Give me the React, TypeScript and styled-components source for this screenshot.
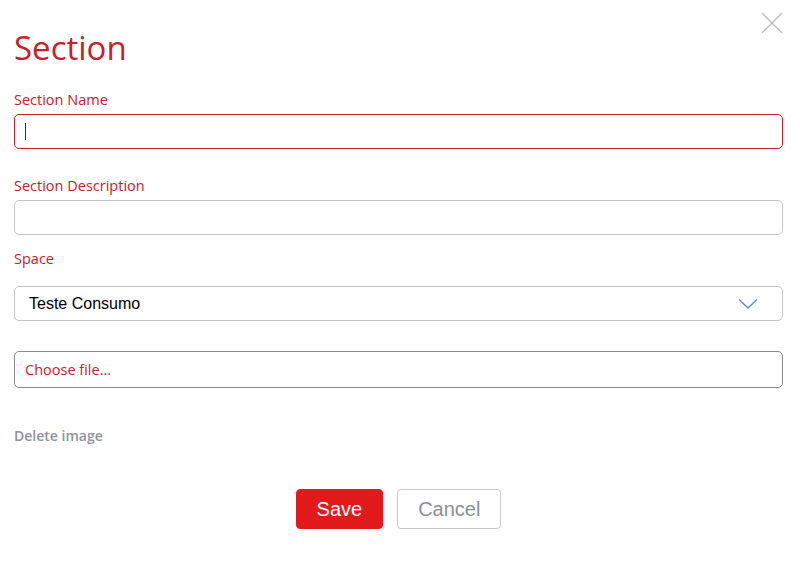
import React from 'react';
import styled, { createGlobalStyle } from 'styled-components';

const GlobalStyle = createGlobalStyle`
    html, body {
        margin: 0;
        padding: 0;
        background: #ffffff;
    }
    body {
        font-family: 'Open Sans', 'Noto Sans', sans-serif;
    }
`;

const red = '#c8202a';

const Modal = styled.div`
    position: relative;
    width: 800px;
    height: 578px;
    box-sizing: border-box;
    padding: 27px 17px 0 14px;
    background: #ffffff;
`;

const CloseButton = styled.button`
    position: absolute;
    top: 11px;
    right: 16px;
    width: 24px;
    height: 24px;
    padding: 0;
    border: none;
    background: transparent;
    cursor: pointer;
`;

const Title = styled.h1`
    margin: 0 0 21px;
    font-family: 'Open Sans', sans-serif;
    font-weight: 400;
    font-size: 33px;
    line-height: 42px;
    color: ${red};
`;

const Label = styled.label<{ $gap?: number }>`
    display: block;
    font-size: 14.5px;
    line-height: 19px;
    color: ${red};
    margin-bottom: ${({ $gap }) => $gap ?? 5}px;
`;

const FieldWrap = styled.div<{ $before?: number; $after?: number }>`
    position: relative;
    margin-top: ${({ $before }) => $before ?? 0}px;
    margin-bottom: ${({ $after }) => $after ?? 0}px;
`;

const TextInput = styled.input<{ $focused?: boolean }>`
    display: block;
    width: 100%;
    height: 35px;
    box-sizing: border-box;
    padding: 0 10px;
    border: 1px solid ${({ $focused }) => ($focused ? red : '#c4c4c4')};
    border-radius: 5px;
    font-family: 'Liberation Sans', Arial, sans-serif;
    font-size: 16px;
    color: #000;
    outline: none;
    caret-color: transparent;
`;

const Caret = styled.span`
    position: absolute;
    left: 11px;
    top: 9px;
    width: 1px;
    height: 17px;
    background: #333;
`;

const SelectBox = styled.div`
    display: flex;
    align-items: center;
    justify-content: space-between;
    height: 35px;
    box-sizing: border-box;
    padding: 0 24px 0 14px;
    border: 1px solid #c4c4c4;
    border-radius: 5px;
    font-family: 'Liberation Sans', Arial, sans-serif;
    font-size: 16px;
    color: #000;
`;

const FileBox = styled.div`
    display: flex;
    align-items: center;
    height: 37px;
    box-sizing: border-box;
    padding: 0 10px;
    border: 1px solid #8a8a8a;
    border-radius: 5px;
    font-size: 14.5px;
    color: ${red};
`;

const DeleteLink = styled.a`
    display: block;
    margin-top: 38px;
    font-size: 14px;
    font-weight: 600;
    color: #8e939a;
    text-decoration: none;
`;

const Actions = styled.div`
    display: flex;
    justify-content: center;
    gap: 14px;
    margin-top: 44px;
`;

const Button = styled.button<{ $primary?: boolean }>`
    height: 40px;
    box-sizing: border-box;
    padding: 0 20px;
    border-radius: 4px;
    border: 1px solid ${({ $primary }) => ($primary ? '#e31a1c' : '#c8c8c8')};
    background: ${({ $primary }) => ($primary ? '#e31a1c' : '#ffffff')};
    color: ${({ $primary }) => ($primary ? '#ffffff' : '#8a8f96')};
    font-family: 'Liberation Sans', Arial, sans-serif;
    font-size: 20px;
    cursor: pointer;
`;

const Chevron = () => (
    <svg width="20" height="12" viewBox="0 0 20 12">
        <path d="M1 1.5 L10 10 L19 1.5" fill="none" stroke="#5b8ad6" strokeWidth="1.4" />
    </svg>
);

const CloseIcon = () => (
    <svg width="24" height="24" viewBox="0 0 24 24">
        <path d="M2 2 L22 22 M22 2 L2 22" stroke="#b8bcc2" strokeWidth="1.3" />
    </svg>
);

export default function App() {
    return (
        <>
            <GlobalStyle />
            <Modal>
                <CloseButton aria-label="Close">
                    <CloseIcon />
                </CloseButton>
                <Title>Section</Title>
                <Label>Section Name</Label>
                <FieldWrap $after={27}>
                    <TextInput $focused />
                    <Caret />
                </FieldWrap>
                <Label>Section Description</Label>
                <FieldWrap $after={14}>
                    <TextInput />
                </FieldWrap>
                <Label $gap={18}>Space</Label>
                <SelectBox>
                    <span>Teste Consumo</span>
                    <Chevron />
                </SelectBox>
                <FieldWrap $before={30}>
                    <FileBox>Choose file...</FileBox>
                </FieldWrap>
                <DeleteLink href="#">Delete image</DeleteLink>
                <Actions>
                    <Button $primary>Save</Button>
                    <Button>Cancel</Button>
                </Actions>
            </Modal>
        </>
    );
}
